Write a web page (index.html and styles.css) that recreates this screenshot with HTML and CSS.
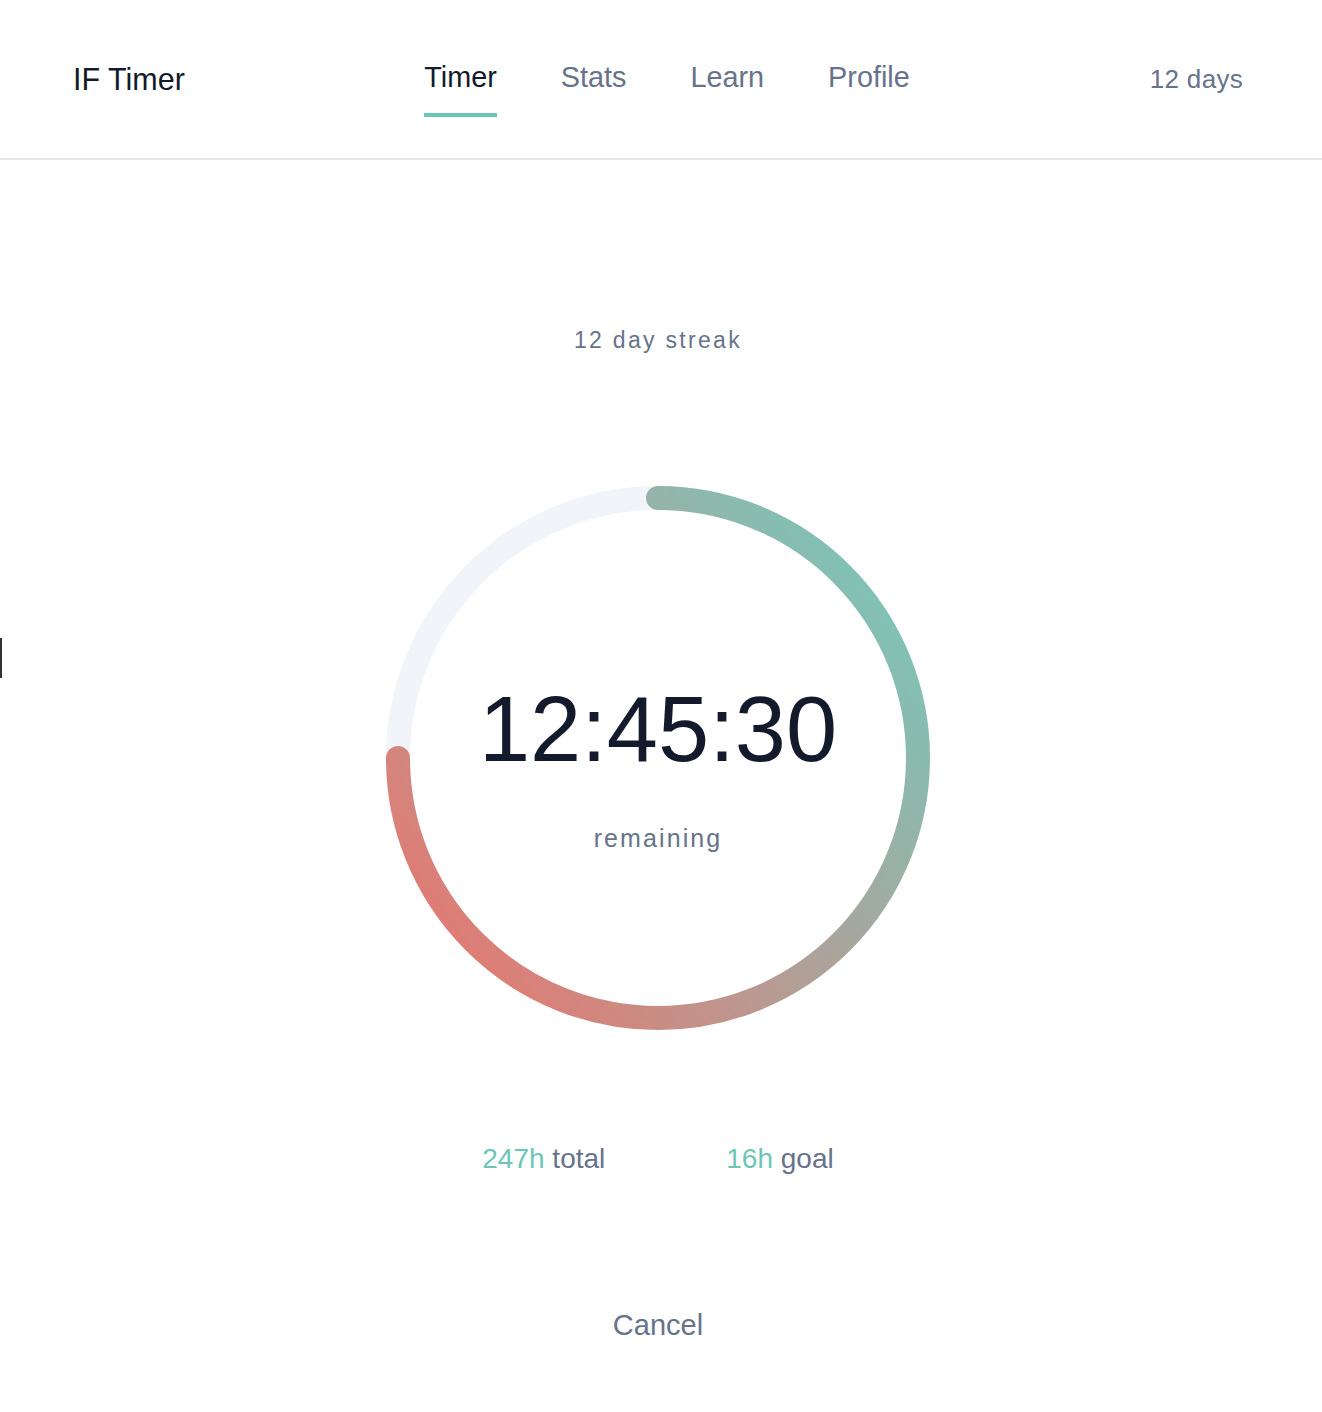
FILE: index.html
```html
<!DOCTYPE html>
<html lang="en">
<head>
<meta charset="utf-8">
<title>IF Timer</title>
<link rel="stylesheet" href="styles.css">
</head>
<body>
<header class="topbar">
  <div class="brand">IF Timer</div>
  <nav class="nav">
    <a class="nav-item active" href="#">Timer</a>
    <a class="nav-item" href="#">Stats</a>
    <a class="nav-item" href="#">Learn</a>
    <a class="nav-item" href="#">Profile</a>
  </nav>
  <div class="days">12 days</div>
</header>

<main class="main">
  <div class="streak">12 day streak</div>

  <div class="ring">
    <svg class="ring-svg" width="544" height="544" viewBox="0 0 544 544">
      <defs>
        <linearGradient id="prog" gradientUnits="userSpaceOnUse" x1="514" y1="134" x2="54" y2="474">
          <stop offset="0" stop-color="#80c2b5"/>
          <stop offset="0.5" stop-color="#b0a098"/>
          <stop offset="1" stop-color="#e27a72"/>
        </linearGradient>
      </defs>
      <circle cx="272" cy="272" r="260" fill="none" stroke="#f1f4f9" stroke-width="24"/>
      <path d="M272 12 A260 260 0 1 1 12 272" fill="none" stroke="url(#prog)" stroke-width="24" stroke-linecap="round"/>
    </svg>
    <div class="readout">
      <div class="time">12:45:30</div>
      <div class="remaining">remaining</div>
    </div>
  </div>

  <div class="stats">
    <div class="stat"><span class="accent">247h</span> total</div>
    <div class="stat"><span class="accent">16h</span> goal</div>
  </div>

  <button class="cancel" type="button">Cancel</button>
</main>

<div class="edge-tab"></div>
</body>
</html>
```

FILE: styles.css
```css
* { box-sizing: border-box; }

html, body {
  margin: 0;
  padding: 0;
  background: #ffffff;
  font-family: "Liberation Sans", Arial, sans-serif;
  color: #131a2b;
}

.topbar {
  height: 160px;
  border-bottom: 2px solid #e5e8ec;
  display: grid;
  grid-template-columns: 1fr auto 1fr;
  align-items: center;
  padding: 0 79px 0 73px;
}

.brand {
  font-size: 30.5px;
  color: #131a2b;
}

.nav {
  display: flex;
  gap: 64px;
  padding-left: 18px;
}

.nav-item {
  position: relative;
  font-size: 28.8px;
  color: #66738b;
  text-decoration: none;
  line-height: 36px;
  margin-top: -4px;
}

.nav-item.active {
  color: #131a2b;
}

.nav-item.active::after {
  content: "";
  position: absolute;
  left: 0;
  right: 0;
  top: 54px;
  height: 4px;
  background: #6cc6b8;
}

.days {
  justify-self: end;
  font-size: 26px;
  color: #66738b;
  letter-spacing: 0.3px;
}

.main {
  display: flex;
  flex-direction: column;
  align-items: center;
  padding-top: 165px;
  padding-right: 6px;
}

.streak {
  font-size: 23px;
  line-height: 30px;
  letter-spacing: 2.3px;
  color: #66738b;
}

.ring {
  position: relative;
  width: 544px;
  height: 544px;
  margin-top: 131px;
  display: flex;
  flex-direction: column;
  align-items: center;
  padding-top: 193px;
}

.ring-svg {
  position: absolute;
  left: 0;
  top: 0;
}

.readout {
  position: relative;
  display: flex;
  flex-direction: column;
  align-items: center;
  gap: 44px;
}

.time {
  font-size: 92px;
  line-height: 100px;
  color: #131a2b;
}

.remaining {
  font-size: 25px;
  line-height: 30px;
  letter-spacing: 2.1px;
  color: #66738b;
}

.stats {
  display: flex;
  gap: 121px;
  margin-top: 111px;
  font-size: 28px;
  line-height: 36px;
  color: #66738b;
}

.accent {
  color: #6cc6b8;
}

.cancel {
  margin-top: 130px;
  background: none;
  border: 0;
  padding: 0;
  font-family: inherit;
  font-size: 29px;
  line-height: 36px;
  color: #66738b;
  cursor: pointer;
}

.edge-tab {
  position: fixed;
  left: 0;
  top: 638px;
  width: 2px;
  height: 40px;
  background: #333;
}
```
